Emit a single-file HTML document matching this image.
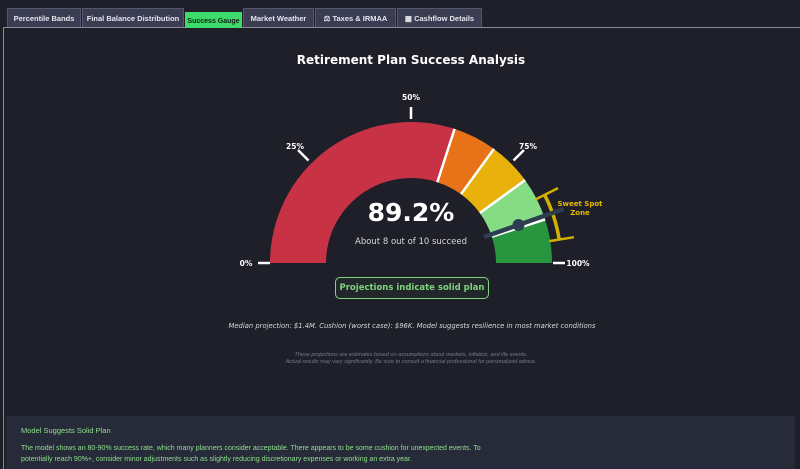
<!DOCTYPE html>
<html><head><meta charset="utf-8"><style>
body{margin:0;width:800px;height:469px;background:#1e1f29;overflow:hidden;font-family:"DejaVu Sans","Liberation Sans",sans-serif;position:relative}
.tab{position:absolute;top:8px;height:19px;background:#3a3d52;border:1px solid #55586c;border-bottom:none;color:#e6e6ee;font-size:7.5px;font-weight:bold;line-height:19px;text-align:center;box-sizing:border-box;white-space:nowrap;font-family:"Liberation Sans",sans-serif}
.panel{position:absolute;left:3px;top:27px;width:797px;height:442px;border-left:1px solid #8a8a96;border-top:1px solid #8a8a96;box-sizing:border-box}
.t{position:absolute;left:0;width:800px;text-align:center;white-space:nowrap}
</style></head><body>
<div class="panel"></div>
<div class="tab" style="left:7px;width:74px">Percentile Bands</div>
<div class="tab" style="left:82px;width:102px">Final Balance Distribution</div>
<div class="tab" style="left:185px;top:12px;height:16px;line-height:17px;width:57px;background:#3ddc6a;color:#102010;border-color:#3ddc6a;font-size:7px">Success Gauge</div>
<div class="tab" style="left:243px;width:71px">Market Weather</div>
<div class="tab" style="left:315px;width:81px">⚖ Taxes &amp; IRMAA</div>
<div class="tab" style="left:397px;width:85px">▦ Cashflow Details</div>
<div class="t" style="top:53px;font-size:12px;font-weight:bold;color:#fff;left:11px">Retirement Plan Success Analysis</div>
<svg style="position:absolute;left:0;top:0" width="800" height="469">
<path d="M270 263 A141 141 0 0 1 454.6 128.9 L437.3 182.2 A85 85 0 0 0 326 263Z" fill="#c73244"/>
<path d="M454.6 128.9 A141 141 0 0 1 493.9 148.9 L461 194.2 A85 85 0 0 0 437.3 182.2Z" fill="#e87217"/>
<path d="M493.9 148.9 A141 141 0 0 1 525.1 180.1 L479.8 213 A85 85 0 0 0 461 194.2Z" fill="#e9b10c"/>
<path d="M525.1 180.1 A141 141 0 0 1 545.1 219.4 L491.8 236.7 A85 85 0 0 0 479.8 213Z" fill="#86dc84"/>
<path d="M545.1 219.4 A141 141 0 0 1 552 263 L496 263 A85 85 0 0 0 491.8 236.7Z" fill="#27963f"/>
<g stroke="#fff" stroke-width="2.5">
<line x1="437.3" y1="182.2" x2="454.6" y2="128.9"/><line x1="461" y1="194.2" x2="493.9" y2="148.9"/>
<line x1="479.8" y1="213" x2="525.1" y2="180.1"/><line x1="491.8" y1="236.7" x2="545.1" y2="219.4"/>
<line x1="258" y1="263" x2="270" y2="263"/><line x1="553" y1="263" x2="565" y2="263"/>
<line x1="308.5" y1="160.5" x2="298" y2="150"/><line x1="411" y1="119" x2="411" y2="107"/><line x1="513.5" y1="160.5" x2="524" y2="150"/>
</g>
<g stroke="#d4b000" stroke-width="2.5" fill="none">
<path d="M544.7 194.9 A150 150 0 0 1 559.2 239.5" stroke-width="3.5"/>
<line x1="535.7" y1="199.4" x2="558" y2="188.1"/><line x1="549.3" y1="241.1" x2="574" y2="237.2"/>
</g>
<line x1="484" y1="237" x2="563.8" y2="209" stroke="#2c3e50" stroke-width="4.5"/>
<circle cx="518.5" cy="225" r="6" fill="#2c3e50"/>
<g fill="#fff" font-size="7.5" font-weight="bold" text-anchor="middle" font-family="DejaVu Sans,sans-serif">
<text x="246" y="266">0%</text><text x="295" y="149">25%</text><text x="411" y="100">50%</text><text x="528" y="149">75%</text><text x="578" y="266">100%</text>
</g>
<g fill="#e6b800" font-size="7" font-weight="bold" text-anchor="middle" font-family="DejaVu Sans,sans-serif">
<text x="580" y="206">Sweet Spot</text><text x="580" y="215">Zone</text>
</g>
<text x="411" y="221" fill="#fff" font-size="25" font-weight="bold" text-anchor="middle" font-family="DejaVu Sans,sans-serif">89.2%</text>
<text x="411" y="244" fill="#d8d8de" font-size="8.5" text-anchor="middle" font-family="DejaVu Sans,sans-serif">About 8 out of 10 succeed</text>
</svg>
<div style="position:absolute;left:335px;top:277px;width:152px;height:20px;border:1.5px solid #7ed47e;border-radius:5px;background:#23262a;color:#7ed47e;font-size:8.5px;font-weight:bold;line-height:20px;text-align:center;white-space:nowrap">Projections indicate solid plan</div>
<div class="t" style="top:322px;font-size:6.8px;font-style:italic;color:#d8d8de;left:12px">Median projection: $1.4M. Cushion (worst case): $96K. Model suggests resilience in most market conditions</div>
<div class="t" style="top:352px;font-size:5.5px;font-style:italic;color:#777a88;line-height:6.5px;left:11px;font-family:'Liberation Sans',sans-serif">These projections are estimates based on assumptions about markets, inflation, and life events.<br>Actual results may vary significantly. Be sure to consult a financial professional for personalized advice.</div>
<div style="position:absolute;left:6px;top:416px;width:789px;height:53px;background:#272a38"></div>
<div style="position:absolute;left:21px;top:426px;font-size:7.5px;color:#8ee08e;font-family:'Liberation Sans',sans-serif">Model Suggests Solid Plan</div>
<div style="position:absolute;left:21px;top:444px;width:650px;white-space:nowrap;font-size:7px;line-height:10.5px;color:#8ee08e;font-family:'Liberation Sans',sans-serif">The model shows an 80-90% success rate, which many planners consider acceptable. There appears to be some cushion for unexpected events. To<br>potentially reach 90%+, consider minor adjustments such as slightly reducing discretionary expenses or working an extra year.</div>
</body></html>
